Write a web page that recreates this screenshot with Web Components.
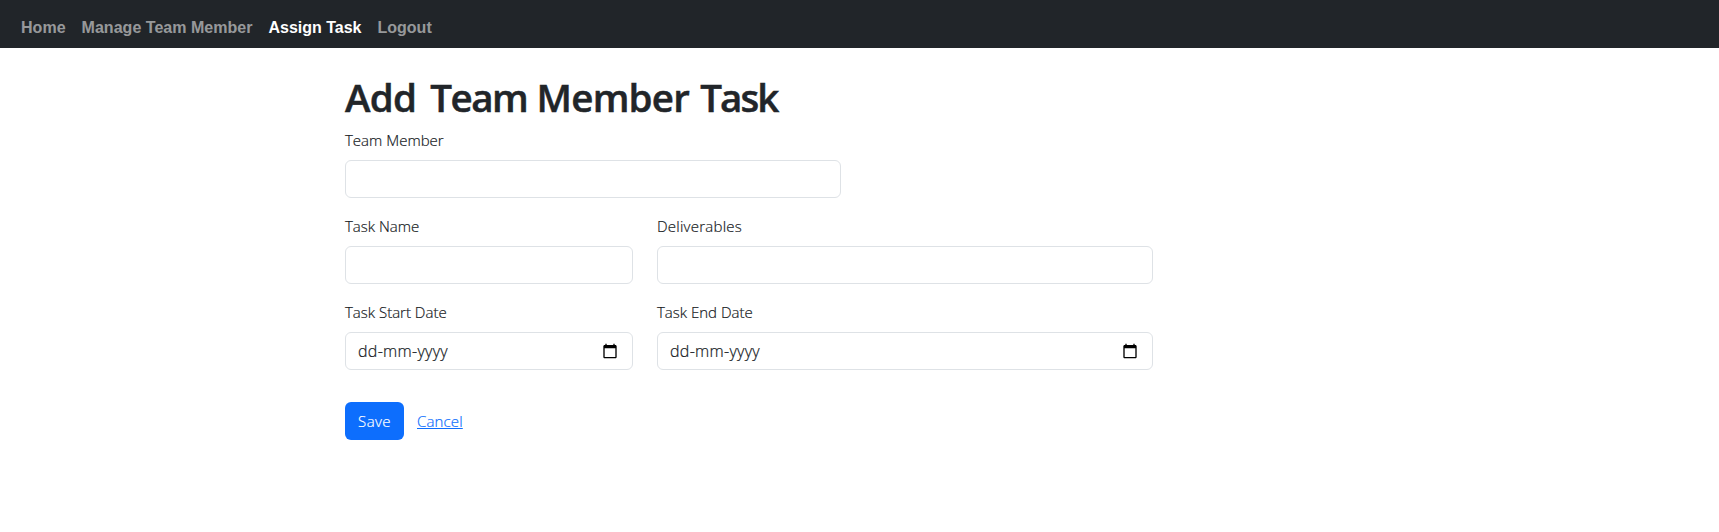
<!DOCTYPE html>
<html lang="en">
<head>
<meta charset="utf-8">
<title>Assign Task</title>
<style>
body { margin: 0; background: #fff; color: #212529; font: 300 15px/24px "Open Sans", "Noto Sans", sans-serif; }
</style>
</head>
<body>
<task-page></task-page>
<script>
const define = (name, html) => customElements.define(name, class extends HTMLElement {
  constructor() {
    super();
    const t = document.createElement('template');
    t.innerHTML = html;
    this.attachShadow({ mode: 'open' }).append(t.content.cloneNode(true));
  }
});

define('nav-item', `
<style>
:host { display: block; color: rgba(255,255,255,.55); cursor: pointer; white-space: nowrap; letter-spacing: .03px; }
:host([active]) { color: #fff; letter-spacing: -.02px; }
</style><slot></slot>`);

define('nav-bar', `
<style>
:host { display: flex; box-sizing: border-box; height: 48px; padding: 16px 21px 0; gap: 16px; background: #212529;
  font: 600 16px/24px "Liberation Sans", Arial, sans-serif; }
</style><slot></slot>`);

define('form-field', `
<style>
:host { display: block; width: 288px; }
:host([wide]) { width: 496px; }
.label { margin-bottom: 8px; white-space: nowrap; color: #15191d; -webkit-text-stroke: .2px; }
</style>
<div class="label"><slot name="label"></slot></div>
<slot></slot>`);

define('text-box', `
<style>
:host { display: block; }
input { display: block; box-sizing: border-box; width: 100%; height: 38px; padding: 6px 12px; margin: 0;
  border: 1px solid #dee2e6; border-radius: 6px; background: #fff; font: inherit; color: inherit; outline: 0; }
</style><input type="text">`);

define('date-box', `
<style>
:host { display: flex; box-sizing: border-box; height: 38px; padding: 0 14px 0 12px; align-items: center; justify-content: space-between;
  border: 1px solid #dee2e6; border-radius: 6px; background: #fff; font-size: 16px; letter-spacing: .3px; color: #15191d; -webkit-text-stroke: .2px; }
svg { display: block; width: 16px; height: 16px; fill: #000; }
</style>
<span>dd-mm-yyyy</span>
<svg viewBox="0 0 24 24"><path d="M20 3h-1V1h-2v2H7V1H5v2H4c-1.1 0-2 .9-2 2v16c0 1.1.9 2 2 2h16c1.1 0 2-.9 2-2V5c0-1.1-.9-2-2-2zm0 18H4V8h16v13z"/></svg>`);

define('form-row', `
<style>:host { display: flex; gap: 24px; margin-bottom: 16px; }</style><slot></slot>`);

define('save-button', `
<style>
:host { display: block; }
button { display: block; box-sizing: border-box; width: 59px; height: 38px; padding: 0; border: 0; border-radius: 6px;
  background: #0d6efd; color: #fff; font: inherit; letter-spacing: .4px; -webkit-text-stroke: .2px; }
</style><button><slot></slot></button>`);

define('text-link', `
<style>
:host { display: block; color: #0d6efd; -webkit-text-stroke: .2px; }
span { text-decoration: underline; letter-spacing: .15px; cursor: pointer; }
</style><span><slot></slot></span>`);

define('task-page', `
<style>
:host { display: block; }
main { margin: 24px 0 0 345px; }
h1 { margin: 0 0 8px; padding-top: 2px; font-size: 38.5px; font-weight: 600; line-height: 46px; letter-spacing: -.77px; white-space: nowrap; -webkit-text-stroke: .5px; }
.team { margin-left: 5px; letter-spacing: -1.5px; }
.task { margin-left: 2px; letter-spacing: -2px; }
.loose { letter-spacing: .25px; }
.actions { display: flex; align-items: center; gap: 13px; margin-top: 32px; }
</style>
<nav-bar>
  <nav-item>Home</nav-item><nav-item>Manage Team Member</nav-item><nav-item active>Assign Task</nav-item><nav-item>Logout</nav-item>
</nav-bar>
<main>
  <h1>Add <span class="team">Team</span> Member <span class="task">Task</span></h1>
  <form-row><form-field wide><span slot="label">Team Member</span><text-box></text-box></form-field></form-row>
  <form-row>
    <form-field><span slot="label">Task Name</span><text-box></text-box></form-field>
    <form-field wide><span slot="label" class="loose">Deliverables</span><text-box></text-box></form-field>
  </form-row>
  <form-row>
    <form-field><span slot="label">Task Start Date</span><date-box></date-box></form-field>
    <form-field wide><span slot="label">Task End Date</span><date-box></date-box></form-field>
  </form-row>
  <div class="actions"><save-button>Save</save-button><text-link>Cancel</text-link></div>
</main>`);
</script>
</body>
</html>
